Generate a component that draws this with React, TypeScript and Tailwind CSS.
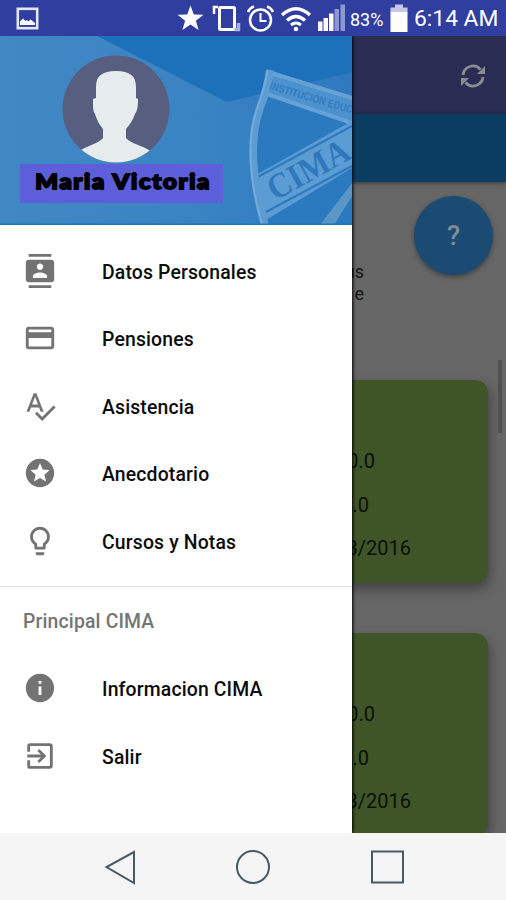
import type { IconType } from "react-icons";
import {
  MdContacts,
  MdCreditCard,
  MdExitToApp,
  MdInfo,
  MdLightbulbOutline,
  MdSpellcheck,
  MdStars,
} from "react-icons/md";

const mainItems: { label: string; Icon: IconType }[] = [
  { label: "Datos Personales", Icon: MdContacts },
  { label: "Pensiones", Icon: MdCreditCard },
  { label: "Asistencia", Icon: MdSpellcheck },
  { label: "Anecdotario", Icon: MdStars },
  { label: "Cursos y Notas", Icon: MdLightbulbOutline },
];

const extraItems: { label: string; Icon: IconType }[] = [
  { label: "Informacion CIMA", Icon: MdInfo },
  { label: "Salir", Icon: MdExitToApp },
];

function StatusBar() {
  return (
    <header className="flex h-9 shrink-0 items-center bg-[#303f9f] text-white">
      <svg className="ml-4 mt-px h-[23px] w-[23px]" viewBox="0 0 23 23">
        <rect x="1.8" y="1.8" width="19.4" height="19.4" fill="none" stroke="#e4e6f5" strokeWidth="2.6" />
        <path d="M4 18v-3.500l3-3 2.500 2.500 1.500-1 1.500 1.500 2-2 4.500 3.500v2z" fill="#fff" />
      </svg>
      <div className="flex-1" />
      <svg className="h-9 w-[176px] shrink-0" viewBox="170 0 176 36">
        <path d="M189.500 5.500l3.300 9 9.700.3-7.600 5.900 2.700 9.400-8.100-5.500-8.100 5.500 2.700-9.400-7.600-5.900 9.700-.3z" fill="#fff" />
        <rect x="218.500" y="7.500" width="15" height="22" rx="1" fill="none" stroke="#fff" strokeWidth="3" />
        <path d="M213 14V7h4" fill="none" stroke="#fff" strokeWidth="2.500" />
        <path d="M237.500 23v6.500h-4" fill="none" stroke="#aab1dc" strokeWidth="3.500" />
        <g fill="none" stroke="#fff" strokeWidth="2.500">
          <circle cx="259.500" cy="20" r="10.500" />
          <path d="M259.500 13v8h6" strokeWidth="2" />
          <path d="M247 12q1.500-4 6-5.500M272 12q-1.500-4-6-5.500" />
          <path d="M281 15q14-12.500 28 0" strokeWidth="3.200" />
          <path d="M286 20.500q9-8 18 0" strokeWidth="3.200" />
          <path d="M290 25q5-4 10 0" strokeWidth="3" />
        </g>
        <circle cx="295" cy="29" r="2.300" fill="#fff" />
        <path d="M317 21.500h4.500V31H317zM322.500 18h4.500v13h-4.500zM328 13.500h4.500V31H328z" fill="#fff" />
        <path d="M333.500 9h4.500v22h-4.500zM339.500 4.500h4.500V31h-4.500z" fill="#8d97d0" />
      </svg>
      <span className="ml-[3px] mt-[3px] w-[35px] whitespace-nowrap text-[18px] leading-none">83%</span>
      <svg className="ml-[5px] h-9 w-[18px] shrink-0" viewBox="0 0 18 36">
        <path d="M5 4.500h8v3h4.500V13H.5V7.500H5z" fill="#c3c8e8" />
        <path d="M.5 12h17v20H.5z" fill="#fff" />
      </svg>
      <span className="ml-[6px] mt-[2px] w-[92px] whitespace-nowrap text-[22.8px] leading-none">6:14 AM</span>
    </header>
  );
}

/** Faceted blue backdrop with the school's shield running off the right edge. */
function HeaderArt() {
  return (
    <svg className="absolute inset-0 h-full w-full" viewBox="0 0 352 189">
      <defs>
        <linearGradient id="base" x1="0" x2="1" y1="0" y2="0">
          <stop offset="0" stopColor="#4189c4" />
          <stop offset="0.6" stopColor="#3983c3" />
          <stop offset="1" stopColor="#2a7ac1" />
        </linearGradient>
        <linearGradient id="facet" x1="0" x2="1" y1="0" y2="0">
          <stop offset="0" stopColor="#3c84c3" />
          <stop offset="1" stopColor="#3079bf" />
        </linearGradient>
      </defs>
      <rect width="352" height="189" fill="url(#base)" />
      <path d="M170 86l57-20 125-30v84l-102-40-23-12z" fill="url(#facet)" />
      <path d="M97 0L227 66l125-30V0z" fill="#1c71ba" />
      {/* shield body */}
      <path d="M268 34l84 26v129h-89Q240 120 256 76q8-22 12-42z" fill="#2b79be" />
      {/* motto band */}
      <path d="M268 34l84 26v26l-86-29z" fill="#4b92cf" />
      <path d="M268 36l84 26M267 58l85 29" stroke="#66a1d5" strokeWidth="4" />
      {/* name band */}
      <path d="M254 140l98-55v47l-86 52q-9-22-12-44z" fill="#5c9cd4" />
      <path d="M256 142l96-52M266 176l86-46" stroke="#2f7abf" strokeWidth="2.200" />
      <path d="M352 160l-18 29h-14l32-42z" fill="#5b96c7" />
      {/* left rim */}
      <path d="M270 34q-2 16-10 38-16 44 5 118" fill="none" stroke="#5d9cd2" strokeWidth="8" />
      <path d="M267.500 34q-2 16-10 38-16 44 5 118" fill="none" stroke="#72aad9" strokeWidth="2" />
      <text transform="translate(269 53) rotate(16.500)" fill="#347cbe" fontSize="11" fontWeight="700" textLength="86" lengthAdjust="spacingAndGlyphs" fontFamily="Liberation Sans, sans-serif">
        INSTITUCIÓN EDUC
      </text>
      <text transform="translate(275 165) rotate(-29)" fill="#2f78bb" fontSize="35" fontWeight="700" textLength="89" lengthAdjust="spacingAndGlyphs" fontFamily="Liberation Serif, serif">
        CIMA
      </text>
      <path d="M0 188.500h352" stroke="#1c76ba" strokeWidth="2" />
    </svg>
  );
}

function Avatar() {
  return (
    <svg className="h-[108px] w-[108px]" viewBox="0 0 108 108">
      <defs>
        <clipPath id="disc">
          <circle cx="54" cy="54" r="53.500" />
        </clipPath>
      </defs>
      <circle cx="54" cy="54" r="53.500" fill="#575e80" />
      <path
        clipPath="url(#disc)"
        fill="#e6eced"
        d="M34 32c0-11 6-16 20-16s20 5 20 16v11l2 1c0 9-1 12-3 15-2 6-5 10-9 15v9c5 6 14 6 26 14v20H16V97c12-8 20-8 25-14v-9c-4-5-6-9-8-15-2-3-2-6-2-15l3-1z"
      />
    </svg>
  );
}

function MenuRow({ label, Icon }: { label: string; Icon: IconType }) {
  return (
    <li className="flex h-[67.5px] items-center pl-[23px]">
      <Icon className="h-[34px] w-[34px] shrink-0 text-[#737373]" />
      <span className="ml-[45px] mt-[3px] whitespace-nowrap text-[19.4px] font-medium tracking-[0.15px] text-[#0c0c0c]">{label}</span>
    </li>
  );
}

function Drawer() {
  return (
    <aside className="z-10 flex w-[352px] shrink-0 flex-col bg-white shadow-[1px_0_3px_#000]">
      <div className="relative h-[189px] shrink-0">
        <HeaderArt />
        <div className="relative flex flex-col items-start pt-[19px]">
          <div className="ml-[62px]">
            <Avatar />
          </div>
          <div className="ml-5 mt-px flex h-[39px] w-[203px] justify-center bg-[#5c5fd9] pl-1 pt-[6px]">
            <span className="origin-center scale-x-[1.14] whitespace-nowrap font-[Lato] text-[21px] font-black leading-[21px] tracking-[1.5px] text-black [-webkit-text-stroke:1.8px_#000]">
              Maria Victoria
            </span>
          </div>
        </div>
      </div>
      <ul className="pt-3 pb-[11px]">
        {mainItems.map((item) => (
          <MenuRow key={item.label} {...item} />
        ))}
      </ul>
      <div className="border-t-[1.5px] border-[#dfdfdf]">
        <h2 className="flex h-[68px] items-center pl-[23px] pt-[3px] text-[19.4px] font-medium tracking-[0.15px] text-[#757575]">Principal CIMA</h2>
        <ul>
          {extraItems.map((item) => (
            <MenuRow key={item.label} {...item} />
          ))}
        </ul>
      </div>
    </aside>
  );
}

function AmountCard() {
  return (
    <section className="flex h-[203px] w-[240px] shrink-0 flex-col rounded-[13px] bg-[#3f5427] pt-[60px] text-[20px] leading-[43.5px] text-[#0b0f07] shadow-[2px_6px_12px_rgba(0,0,0,0.35)]">
      <p className="w-[127px] text-right">10.0</p>
      <p className="w-[121px] text-right">0.0</p>
      <p className="w-[163px] text-right">28/03/2016</p>
    </section>
  );
}

function DimmedPage() {
  return (
    <main className="flex min-w-0 flex-1 flex-col overflow-hidden bg-[#666]">
      <div className="flex h-[78px] shrink-0 items-center justify-end bg-[#292d53] pr-[19px] pt-[2px]">
        <svg className="h-[28px] w-[28px]" viewBox="0 0 28 28" fill="none" stroke="#8b8b90" strokeWidth="2.800">
          <path d="M4 13a10 10 0 0 1 17.500-5.500M24 15a10 10 0 0 1-17.500 5.500" />
          <path d="M26 4v8h-8zM2 24v-8h8z" fill="#8b8b90" stroke="none" />
        </svg>
      </div>
      <div className="h-[68px] shrink-0 bg-[#0b3c61] shadow-[0_1px_4px_rgba(0,0,0,0.5)]" />
      <div className="relative flex min-h-0 flex-1 flex-col overflow-hidden">
        <div className="flex h-[198px] shrink-0 justify-between">
          <div className="flex w-3 flex-col items-end pt-[79px] text-[18px] leading-[21.5px] text-[#151515]">
            <span>us</span>
            <span>e</span>
          </div>
          <div className="mr-[13px] mt-[14px] flex h-[79px] w-[79px] items-center justify-center rounded-full bg-[#1b4b72] pt-[2px] text-[27px] font-medium text-[#7f8c96] shadow-[0_2px_5px_rgba(0,0,0,0.4)]">
            ?
          </div>
        </div>
        <div className="flex shrink-0 flex-col items-end gap-[50px] pr-[18px]">
          <AmountCard />
          <AmountCard />
        </div>
        <div className="absolute right-1 top-[178px] h-[73px] w-1 bg-[#505050]" />
      </div>
    </main>
  );
}

function NavBar() {
  return (
    <nav className="flex h-[67px] shrink-0 items-center justify-center gap-[98px] bg-[#f5f5f5]">
      <svg className="h-9 w-9" viewBox="0 0 36 36" fill="none" stroke="#485a64" strokeWidth="2">
        <path d="M33 3v31L5.500 18z" />
      </svg>
      <svg className="h-9 w-9" viewBox="0 0 36 36" fill="none" stroke="#485a64" strokeWidth="2">
        <circle cx="18" cy="18" r="16" />
      </svg>
      <svg className="h-9 w-9" viewBox="0 0 36 36" fill="none" stroke="#485a64" strokeWidth="2">
        <path d="M3 2.500h31v31H3z" />
      </svg>
    </nav>
  );
}

export default function App() {
  return (
    <div className="flex h-[900px] w-[506px] flex-col overflow-hidden font-[Roboto,sans-serif]">
      <StatusBar />
      <div className="flex min-h-0 flex-1 overflow-hidden">
        <Drawer />
        <DimmedPage />
      </div>
      <NavBar />
    </div>
  );
}
